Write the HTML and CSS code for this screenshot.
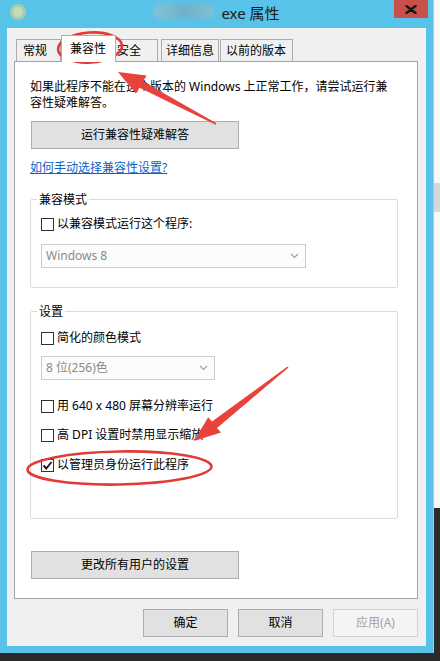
FILE: index.html
```html
<!DOCTYPE html>
<html lang="zh-CN">
<head>
<meta charset="utf-8">
<title>exe 属性</title>
<link rel="stylesheet" href="styles.css">
</head>
<body>
<div class="screen">
  <div class="window">
    <div class="titlebar">
      <div class="tb-left">
        <svg class="app-icon" width="20" height="20" viewBox="0 0 20 20"><circle cx="10" cy="10" r="8" fill="#b8cfa3" opacity="0.8"/><circle cx="10" cy="10" r="5" fill="#c9dcb8" opacity="0.9"/></svg>
      </div>
      <div class="title"><span class="blur"></span><span class="title-text">exe 属性</span></div>
      <div class="tb-right">
        <div class="close"><svg width="12" height="9" viewBox="0 0 12 9"><path d="M1.5 1 L10.5 8 M10.5 1 L1.5 8" stroke="#151515" stroke-width="2.4" stroke-linecap="round"/></svg></div>
      </div>
    </div>
    <div class="client">
      <div class="tabs">
        <div class="tab t1">常规</div>
        <div class="tab t2 selected">兼容性</div>
        <div class="tab t3">安全</div>
        <div class="tab t4">详细信息</div>
        <div class="tab t5">以前的版本</div>
      </div>
      <div class="panel">
        <p class="intro">如果此程序不能在这个版本的 Windows 上正常工作，请尝试运行兼<br>容性疑难解答。</p>
        <div class="btn wide btn-run">运行兼容性疑难解答</div>
        <a class="link">如何手动选择兼容性设置?</a>
        <div class="group g1">
          <span class="legend">兼容模式</span>
          <div class="row r-compat"><span class="cb"></span><span>以兼容模式运行这个程序:</span></div>
          <div class="select sel-os"><span>Windows 8</span><svg width="9" height="6" viewBox="0 0 9 6"><path d="M1 1 L4.5 4.5 L8 1" fill="none" stroke="#a0a0a0" stroke-width="1.2"/></svg></div>
        </div>
        <div class="group g2">
          <span class="legend">设置</span>
          <div class="row r1"><span class="cb"></span><span>简化的颜色模式</span></div>
          <div class="select sel-color"><span>8 位(256)色</span><svg width="9" height="6" viewBox="0 0 9 6"><path d="M1 1 L4.5 4.5 L8 1" fill="none" stroke="#a0a0a0" stroke-width="1.2"/></svg></div>
          <div class="row r2"><span class="cb"></span><span>用 640 x 480 屏幕分辨率运行</span></div>
          <div class="row r3"><span class="cb"></span><span>高 DPI 设置时禁用显示缩放</span></div>
          <div class="row r4"><span class="cb checked"><svg width="11" height="11" viewBox="0 0 11 11"><path d="M1.5 5.5 L4.2 8.5 L9.5 2" fill="none" stroke="#1a1a1a" stroke-width="1.9"/></svg></span><span>以管理员身份运行此程序</span></div>
        </div>
        <div class="btn wide btn-all">更改所有用户的设置</div>
      </div>
      <div class="actions">
        <div class="btn act">确定</div>
        <div class="btn act">取消</div>
        <div class="btn act disabled">应用(A)</div>
      </div>
    </div>
  </div>
  <div class="side"></div>
</div>
<svg class="annot" width="440" height="661" viewBox="0 0 440 661">
  <ellipse cx="90" cy="47.5" rx="32" ry="15" fill="none" stroke="#e23b35" stroke-width="2.6" transform="rotate(-4 90 47.5)"/>
  <polygon points="118,72 146.5,75.6 143.2,81.4 216.4,123.3 215.6,124.7 139.6,87.8 135.9,93.6" fill="#e8423a"/>
  <polygon points="194,441 221,432.6 217,428 288.5,367.6 287.5,366.4 212,421.6 208.2,417.2" fill="#e8423a"/>
  <ellipse cx="119.5" cy="468" rx="92" ry="16.5" fill="none" stroke="#e23b35" stroke-width="2.6" transform="rotate(-1 119.5 468)"/>
</svg>
</body>
</html>
```

FILE: styles.css
```css
* { box-sizing: border-box; }
html, body { margin: 0; padding: 0; }
body {
  width: 440px;
  height: 661px;
  overflow: hidden;
  background: #2b2b2b;
  font-family: "Noto Sans", "Noto Sans CJK SC", sans-serif;
  font-size: 12px;
  color: #000;
  position: relative;
}
.screen { display: flex; height: 653px; }
.window {
  width: 433px;
  height: 653px;
  background: #58c3e8;
  display: flex;
  flex-direction: column;
}
.side {
  width: 7px;
  height: 653px;
  background: linear-gradient(to bottom, #f8f8f8 0, #f8f8f8 183px, #d4d8db 183px, #d4d8db 212px, #f8f8f8 212px, #f8f8f8 508px, #2b2b2b 508px);
  border-left: 1px solid #c4c4c4;
}
.titlebar {
  height: 28px;
  display: grid;
  grid-template-columns: 1fr auto 1fr;
}
.tb-left { padding: 2px 0 0 8px; }
.tb-right { display: flex; justify-content: flex-end; padding-right: 5px; }
.close {
  width: 34px;
  height: 18px;
  background: #c7504b;
  display: flex;
  align-items: center;
  justify-content: center;
}
.title {
  display: flex;
  align-items: center;
  height: 22px;
  padding-top: 4px;
  font-size: 15px;
  color: #1a1a1a;
}
.blur {
  display: inline-block;
  width: 62px;
  height: 15px;
  border-radius: 7px;
  margin-right: 6px;
  margin-top: -3px;
  background: linear-gradient(to right, #86c3d8, #6eb2c9 50%, #82c0d6);
  filter: blur(2px);
}
.title-text { line-height: 20px; }
.client {
  margin: 0 7px;
  height: 618px;
  background: #f0f0f0;
  display: flex;
  flex-direction: column;
}
.tabs {
  margin-top: 7px;
  height: 26px;
  display: flex;
  align-items: flex-end;
  padding-left: 9px;
}
.tab {
  height: 22px;
  border: 1px solid #adadad;
  border-bottom: none;
  background: #f0f0f0;
  padding-top: 3px;
  line-height: 16px;
  white-space: nowrap;
}
.t1 { width: 45px; padding-left: 6px; }
.t2 { width: 55px; padding-left: 8px; }
.t3 { width: 43px; padding-left: 1px; margin-left: -1px; }
.t4 { width: 58px; padding-left: 4px; margin-left: 3px; }
.t5 { width: 73px; padding-left: 5px; margin-left: 1px; }
.tab.selected {
  height: 27px;
  margin-bottom: -1px;
  padding-top: 5px;
  background: #fff;
  position: relative;
  z-index: 1;
}
.panel {
  margin-left: 7px;
  width: 404px;
  height: 538px;
  border: 1px solid #a3a3a3;
  background: #fff;
  padding: 17px 0 0 15px;
  display: flex;
  flex-direction: column;
  align-items: flex-start;
}
.intro {
  margin: 0;
  line-height: 16px;
  white-space: nowrap;
}
.btn {
  height: 28px;
  border: 1px solid #adadad;
  background: #e1e1e1;
  display: flex;
  align-items: center;
  justify-content: center;
  line-height: 16px;
}
.wide { width: 208px; margin-left: 1px; }
.btn-run { margin-top: 10px; }
.link {
  margin-top: 11px;
  line-height: 16px;
  color: #0a64c8;
  text-decoration: underline;
}
.group {
  width: 368px;
  border: 1px solid #dcdcdc;
  border-radius: 2px;
  margin-top: 23px;
  padding-left: 10px;
  display: flex;
  flex-direction: column;
  align-items: flex-start;
}
.legend {
  margin: -8px 0 0 -4px;
  padding: 0 2px;
  background: #fff;
  line-height: 16px;
}
.g1 { padding-bottom: 19px; }
.g2 { padding-bottom: 45px; }
.row {
  display: flex;
  align-items: center;
  height: 16px;
  line-height: 16px;
  gap: 3px;
  white-space: nowrap;
}
.cb {
  width: 13px;
  height: 13px;
  border: 1px solid #333;
  background: #fff;
  display: flex;
  align-items: center;
  justify-content: center;
}
.r-compat { margin-top: 8px; }
.r1 { margin-top: 10px; }
.r2 { margin-top: 18px; }
.r3 { margin-top: 13px; }
.r4 { margin-top: 14px; }
.select {
  height: 24px;
  border: 1px solid #cdcdcd;
  background: #fcfcfc;
  color: #8a8a8a;
  display: flex;
  align-items: center;
  justify-content: space-between;
  padding: 0 6px 0 4px;
  line-height: 16px;
}
.sel-os { width: 265px; margin-top: 12px; }
.sel-color { width: 174px; margin-top: 10px; }
.btn-all { margin-top: 32px; }
.actions {
  margin-top: 10px;
  display: flex;
  justify-content: flex-end;
  gap: 10px;
  padding-right: 8px;
}
.act { width: 85px; }
.act.disabled {
  background: #f4f4f4;
  border-color: #d3d3d3;
  color: #a2a2a2;
}
.annot {
  position: absolute;
  left: 0;
  top: 0;
  pointer-events: none;
}
```
